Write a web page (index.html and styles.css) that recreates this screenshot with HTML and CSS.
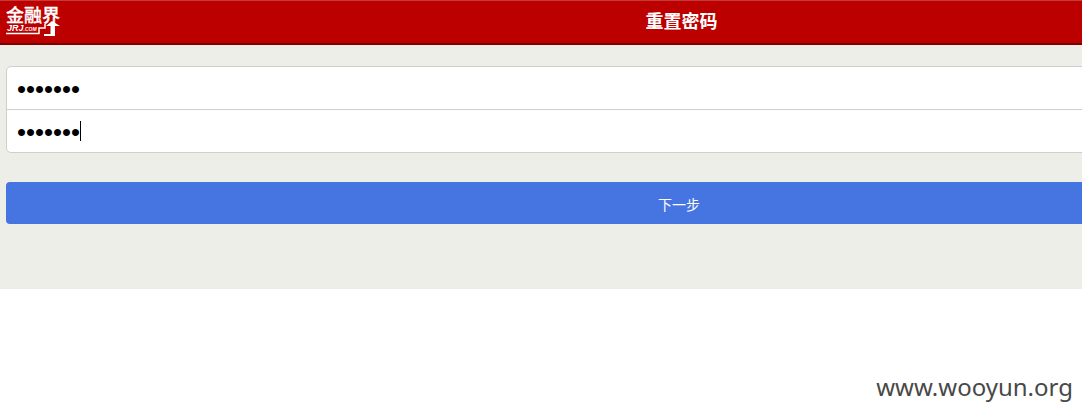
FILE: index.html
```html
<!DOCTYPE html>
<html lang="zh">
<head>
<meta charset="utf-8">
<title>重置密码</title>
<link rel="stylesheet" href="styles.css">
</head>
<body>
<div class="page">
  <header class="header">
    <div class="logo">
      <span class="logo-cn">金融界</span>
      <span class="logo-en"><span class="logo-jrj">JRJ</span>.COM</span>
      <svg class="logo-stair" width="62" height="44" viewBox="0 0 62 44" aria-hidden="true">
        <path d="M6 33.500H39V28H45V24" fill="none" stroke="#fff" stroke-width="1.500"/>
        <path d="M44 36V34H50.500V26H46L52 21L60 26H55V36Z" fill="#fff"/>
      </svg>
    </div>
    <h1 class="title">重置密码</h1>
  </header>
  <main class="content">
    <div class="fields">
      <div class="field"><span class="dots">•••••••</span></div>
      <div class="field"><span class="dots">•••••••</span><span class="caret"></span></div>
    </div>
    <button class="next" type="button">下一步</button>
  </main>
</div>
<div class="watermark">www.wooyun.org</div>
</body>
</html>
```
FILE: styles.css
```css
* { box-sizing: border-box; }
html, body { margin: 0; padding: 0; height: 100%; overflow: hidden; background: #fff; }
body { font-family: "Liberation Sans", "Noto Sans CJK SC", sans-serif; width: 1082px; height: 416px; position: relative; }
.page { width: 1363px; height: 289px; background: #edeee8; }
.header { height: 45px; background: #bc0000; border-top: 1px solid #c53a3a; border-bottom: 2px solid #7c0000; display: flex; align-items: center; justify-content: center; position: relative; }
.title { margin: 0; font-size: 18px; font-weight: bold; color: #fff; line-height: 41px; }
.logo { position: absolute; left: 0; top: -1px; width: 62px; height: 44px; color: #fff; }
.logo-cn { position: absolute; left: 6px; top: 7px; font-size: 18px; line-height: 18px; font-weight: 500; -webkit-text-stroke: 0.3px #fff; white-space: nowrap; }
.logo-en { position: absolute; left: 7px; top: 25px; font-size: 5px; line-height: 7px; font-weight: bold; font-style: italic; white-space: nowrap; }
.logo-jrj { font-size: 9px; }
.logo-stair { position: absolute; left: 0; top: 0; }
.content { padding: 21px 11px 0 6px; }
.fields { background: #fff; border: 1px solid #cfcfcf; border-radius: 5px; height: 87px; }
.field { height: 42px; padding-left: 10px; display: flex; align-items: center; }
.field + .field { height: 43px; border-top: 1px solid #cfcfcf; }
.dots { font-size: 25.700px; color: #000; line-height: 20px; padding-top: 2px; }
.caret { width: 1px; height: 20px; background: #000; }
.next { display: block; width: 100%; height: 42px; margin: 29px 0 0; padding: 2px 0 0; background: #4674e0; color: #fff; border: 0; border-radius: 4px; font-family: "Liberation Sans", "Noto Sans CJK SC", sans-serif; font-size: 14px; }
.watermark { position: absolute; right: 9px; top: 372px; font-family: "Noto Sans", sans-serif; font-size: 24px; line-height: 30px; color: #484848; }
```
